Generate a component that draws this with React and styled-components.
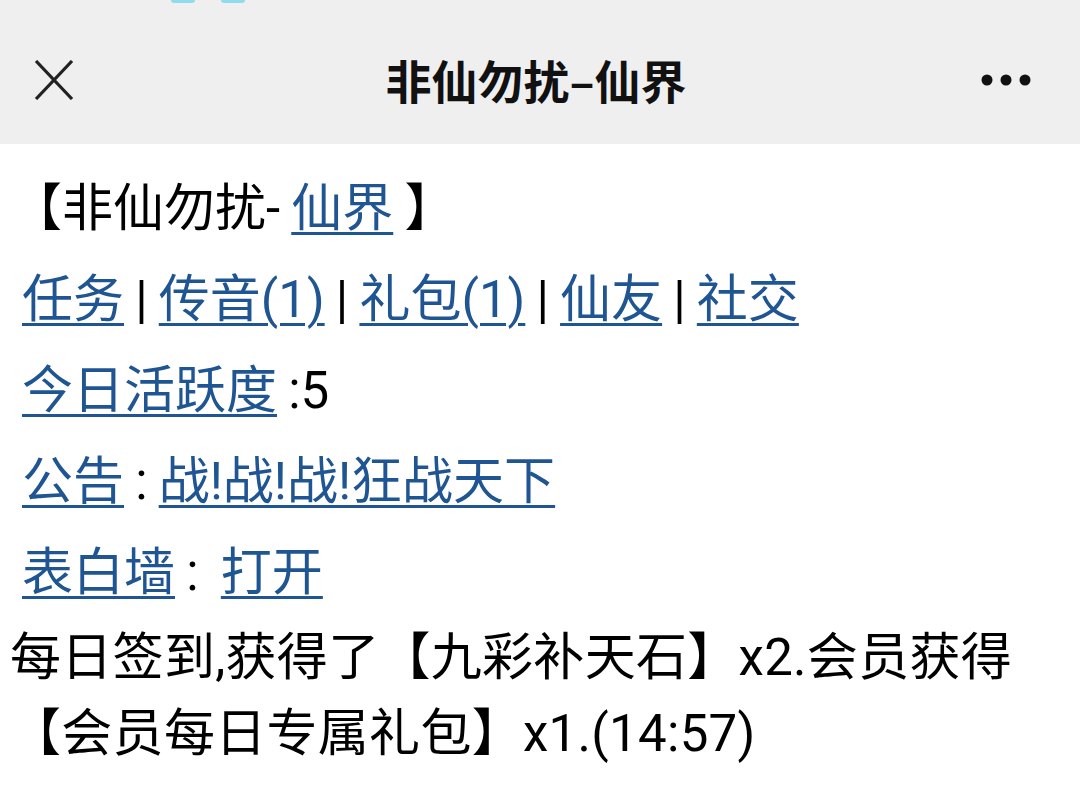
import React from 'react';
import styled, { createGlobalStyle } from 'styled-components';

const GlobalStyle = createGlobalStyle`
  html, body {
    margin: 0;
    padding: 0;
    background: #fff;
  }
  body {
    font-family: Roboto, "Noto Sans CJK SC", sans-serif;
    color: #000;
  }
`;

const Page = styled.div`
  width: 1080px;
  min-height: 810px;
  background: #fff;
  overflow: hidden;
`;

const TopBar = styled.header`
  position: relative;
  height: 144px;
  background: #efefef;
  display: flex;
  align-items: center;
  justify-content: space-between;
  padding: 0 46px 0 34px;
  box-sizing: border-box;
`;

const StatusMark = styled.span`
  position: absolute;
  top: -3px;
  left: ${p => p.left}px;
  width: 24px;
  height: 6px;
  border-radius: 3px;
  background: #8fdcee;
`;

const IconButton = styled.button`
  border: 0;
  background: none;
  padding: 0;
  width: ${p => p.wide ? 56 : 40}px;
  height: 40px;
  display: flex;
  align-items: center;
  justify-content: center;
  margin-top: 16px;
`;

const Title = styled.h1`
  position: absolute;
  left: 0;
  right: 8px;
  top: 49px;
  margin: 0;
  text-align: center;
  font-family: "Noto Sans CJK SC", sans-serif;
  font-weight: 700;
  font-size: 46px;
  line-height: 60px;
  color: #111;
  pointer-events: none;
`;

const Content = styled.main`
  padding: 19px 10px 0;
  font-size: 51px;
  word-spacing: -1.5px;
`;

const Row = styled.div`
  line-height: 75px;
  padding: 8px 0 8px ${p => p.indent ?? 12}px;
  white-space: nowrap;
`;

const Link = styled.a`
  color: #1f5592;
  text-decoration: underline;
  text-decoration-thickness: 3px;
  text-underline-offset: 6px;
  cursor: pointer;
`;

const Notice = styled.p`
  margin: 2px 0 0;
  line-height: 76px;
  letter-spacing: 0.3px;
`;

const CloseIcon = () => (
  <svg width="40" height="40" viewBox="0 0 40 40">
    <path d="M2 1 L38 39 M38 1 L2 39" stroke="#222" strokeWidth="3.2" fill="none" />
  </svg>
);

const MoreIcon = () => (
  <svg width="52" height="14" viewBox="0 0 52 14">
    <circle cx="7" cy="7" r="5.5" fill="#111" />
    <circle cx="26" cy="7" r="5.5" fill="#111" />
    <circle cx="45" cy="7" r="5.5" fill="#111" />
  </svg>
);

export default function App() {
  return (
    <>
      <GlobalStyle />
      <Page>
        <TopBar>
          <StatusMark left={171} />
          <StatusMark left={221} />
          <IconButton aria-label="关闭"><CloseIcon /></IconButton>
          <Title>非仙勿扰–仙界</Title>
          <IconButton aria-label="更多" wide><MoreIcon /></IconButton>
        </TopBar>
        <Content>
          <Row indent={1}>【非仙勿扰- <Link>仙界</Link> 】</Row>
          <Row><Link>任务</Link> | <Link>传音(1)</Link> | <Link>礼包(1)</Link> | <Link>仙友</Link> | <Link>社交</Link></Row>
          <Row><Link>今日活跃度</Link> :5</Row>
          <Row><Link>公告</Link> : <Link>战!战!战!狂战天下</Link></Row>
          <Row><Link>表白墙</Link> :&nbsp; <Link>打开</Link></Row>
          <Notice>每日签到,获得了【九彩补天石】x2.会员获得【会员每日专属礼包】x1.(14:57)</Notice>
        </Content>
      </Page>
    </>
  );
}
